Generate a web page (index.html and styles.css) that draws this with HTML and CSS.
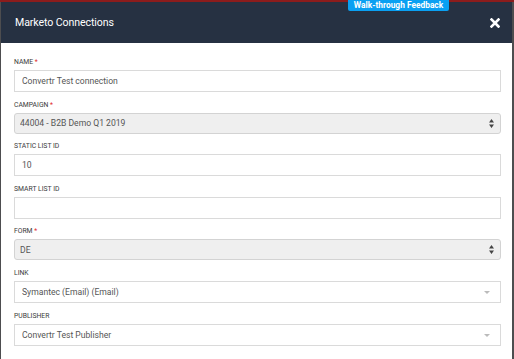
FILE: index.html
```html
<html>
    <head>
        <title>Marketo Connections</title>
        <link rel="stylesheet" href="styles.css">
    </head>
    <body>
        <div class="strip"></div>
        <div class="modal">
            <div class="modal-header">
                <h2>Marketo Connections</h2>
                <button class="close" type="button">
                    <svg width="10" height="10" viewBox="0 0 10 10"><path d="M1.5 1.5 L8.5 8.5 M8.5 1.5 L1.5 8.5" stroke="#fff" stroke-width="2.6" stroke-linecap="square"/></svg>
                </button>
            </div>
            <form class="modal-body">
                <div class="field">
                    <label>Name <span class="req">*</span></label>
                    <input class="control" type="text" value="Convertr Test connection">
                </div>
                <div class="field">
                    <label>Campaign <span class="req">*</span></label>
                    <div class="select-wrap">
                        <select class="control native" disabled><option>44004 - B2B Demo Q1 2019</option></select>
                        <svg class="updown" width="5" height="9" viewBox="0 0 5 9"><path d="M2.5 0 L5 3.5 L0 3.5 Z M2.5 9 L5 5.5 L0 5.5 Z" fill="#444"/></svg>
                    </div>
                </div>
                <div class="field">
                    <label>Static List ID</label>
                    <input class="control" type="text" value="10">
                </div>
                <div class="field">
                    <label>Smart List ID</label>
                    <input class="control" type="text" value="">
                </div>
                <div class="field">
                    <label>Form <span class="req">*</span></label>
                    <div class="select-wrap">
                        <select class="control native" disabled><option>DE</option></select>
                        <svg class="updown" width="5" height="9" viewBox="0 0 5 9"><path d="M2.5 0 L5 3.5 L0 3.5 Z M2.5 9 L5 5.5 L0 5.5 Z" fill="#444"/></svg>
                    </div>
                </div>
                <div class="field">
                    <label>Link</label>
                    <div class="select-wrap">
                        <select class="control pick"><option>Symantec (Email) (Email)</option></select>
                        <svg class="caret" width="6" height="3" viewBox="0 0 6 3"><path d="M0 0 L6 0 L3 3 Z" fill="#bbb"/></svg>
                    </div>
                </div>
                <div class="field">
                    <label>Publisher</label>
                    <div class="select-wrap">
                        <select class="control pick"><option>Convertr Test Publisher</option></select>
                        <svg class="caret" width="6" height="3" viewBox="0 0 6 3"><path d="M0 0 L6 0 L3 3 Z" fill="#bbb"/></svg>
                    </div>
                </div>
            </form>
        </div>
        <a class="feedback" href="#">Walk-through Feedback</a>
    </body>
</html>
```

FILE: styles.css
```css
*{
    margin: 0;
    padding: 0;
    box-sizing: border-box;
}
body{
    margin: 0;
    background-color: #4d4d4f;
    font-family: Roboto, "Liberation Sans", sans-serif;
    height: 359px;
    overflow: hidden;
}

.strip{
    height: 2px;
    background-color: #8c1c1c;
}

.modal{
    margin: 0 2px 0 1px;
    background: #fff;
    height: 357px;
}
.modal-header{
    height: 41px;
    background-color: #263142;
    display: flex;
    align-items: center;
    justify-content: space-between;
    padding: 0 12px 0 14px;
}
.modal-header h2{
    color: #fff;
    font-size: 10.6px;
    font-weight: 400;
    letter-spacing: -0.1px;
}
.close{
    background: none;
    border: none;
    width: 10px;
    height: 10px;
    display: flex;
    cursor: pointer;
}

.modal-body{
    padding: 14px 11px 0 13px;
}
.field{
    margin-bottom: 7.6px;
}
.field label{
    display: block;
    font-size: 6.8px;
    line-height: 10px;
    font-weight: 400;
    text-transform: uppercase;
    color: #3a3a3a;
    margin-bottom: 3px;
}
.req{
    color: #e02b2b;
}
.control{
    display: block;
    width: 100%;
    height: 22px;
    border: 1px solid #dadada;
    background: #fff;
    font-family: Roboto, "Liberation Sans", sans-serif;
    font-size: 8.6px;
    color: #555;
    padding: 0 7px;
    outline: none;
    appearance: none;
    -webkit-appearance: none;
}
.select-wrap{
    position: relative;
}
.native{
    height: 21px;
    background: #efefef;
    border-color: #d3d3d3;
    border-radius: 3px;
    padding: 0 5px;
    color: #555;
    opacity: 1;
}
.updown{
    position: absolute;
    right: 7px;
    top: 6px;
}
.caret{
    position: absolute;
    right: 11px;
    top: 10px;
}

.feedback{
    position: absolute;
    top: 0;
    left: 348px;
    width: 101px;
    height: 11px;
    background-color: #0aa0f2;
    border-radius: 0 0 2px 2px;
    color: #fff;
    font-size: 8.4px;
    font-weight: 700;
    line-height: 11px;
    text-align: center;
    text-decoration: none;
}
```
